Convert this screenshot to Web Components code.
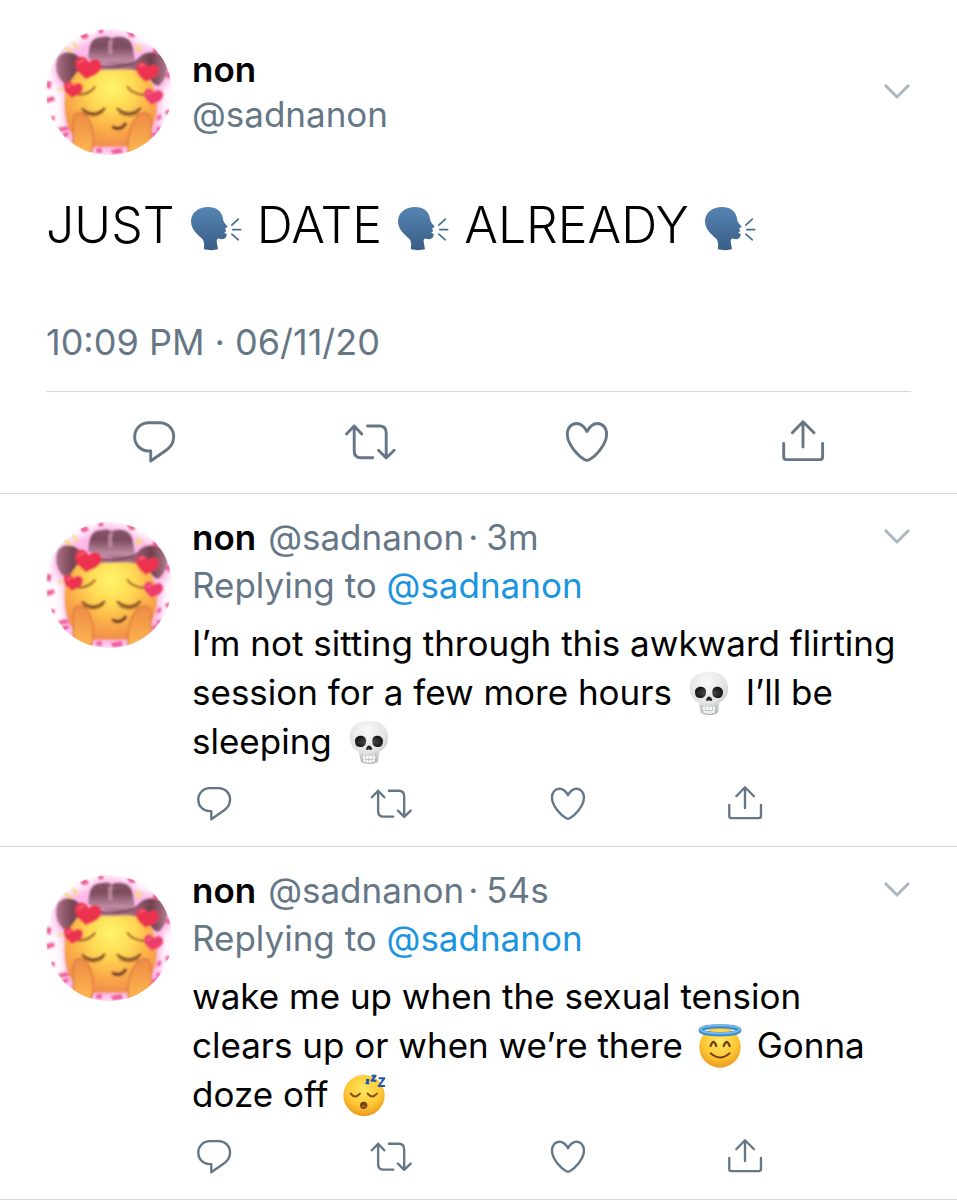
<!DOCTYPE html>
<html lang="en">
<head>
<meta charset="utf-8">
<meta name="viewport" content="width=device-width, initial-scale=1">
<title>non (@sadnanon)</title>
<style>
  body {
    margin: 0;
    background: #fff;
    color: #000;
    font-family: Inter, "Liberation Sans", sans-serif;
    font-size: 35px;
    line-height: 48px;
    --muted: #657786;
    --link: #1b95e0;
    --line: #d6dae8;
    --side: 46px;
  }
</style>
</head>
<body>
<main>
  <tweet-post name="non" handle="@sadnanon" time="10:09 PM · 06/11/20">
    JUST <tweet-emoji name="speaking"></tweet-emoji> DATE <tweet-emoji name="speaking"></tweet-emoji> ALREADY <tweet-emoji name="speaking"></tweet-emoji>
  </tweet-post>
  <tweet-reply name="non" handle="@sadnanon" time="3m" to="@sadnanon">
    I’m not sitting through this awkward flirting session for a few more hours <tweet-emoji name="skull"></tweet-emoji> I’ll be sleeping <tweet-emoji name="skull"></tweet-emoji>
  </tweet-reply>
  <tweet-reply name="non" handle="@sadnanon" time="54s" to="@sadnanon">
    wake me up when the sexual tension clears up or when we’re there <tweet-emoji name="halo"></tweet-emoji> Gonna doze off <tweet-emoji name="sleeping"></tweet-emoji>
  </tweet-reply>
</main>

<script>
const HEART = 'M0 30C-8 22 -36 12 -36 -10C-36 -32 -10 -36 0 -17C10 -36 36 -32 36 -10C36 12 8 22 0 30Z';

class TweetAvatar extends HTMLElement {
  constructor() {
    super();
    this.attachShadow({mode: 'open'});
  }

  connectedCallback() {
    this.shadowRoot.innerHTML = `
      <style>
        :host {
          display: block;
          flex: none;
          width: 126px;
          height: 126px;
        }

        svg {
          display: block;
          width: 100%;
          height: 100%;
          border-radius: 50%;
        }
      </style>

      <svg viewBox="19 25 378 378" role="img" aria-label="Profile picture">
        <defs>
          <radialGradient id="face" cx="215" cy="200" r="185" gradientUnits="userSpaceOnUse">
            <stop offset="0" stop-color="#fff56a"/>
            <stop offset=".35" stop-color="#ffdb55"/>
            <stop offset=".68" stop-color="#fbae48"/>
            <stop offset="1" stop-color="#f08a4c"/>
          </radialGradient>
          <linearGradient id="hat" x1="0" y1="45" x2="0" y2="140" gradientUnits="userSpaceOnUse">
            <stop offset="0" stop-color="#84566a"/>
            <stop offset=".35" stop-color="#7d4c5e"/>
            <stop offset=".8" stop-color="#c08da6"/>
            <stop offset="1" stop-color="#8a5467"/>
          </linearGradient>
          <linearGradient id="brim" x1="50" y1="0" x2="385" y2="0" gradientUnits="userSpaceOnUse">
            <stop offset="0" stop-color="#ab7387"/>
            <stop offset=".15" stop-color="#754552"/>
            <stop offset=".45" stop-color="#b07c93"/>
            <stop offset=".65" stop-color="#a36e84"/>
            <stop offset=".85" stop-color="#6f404c"/>
            <stop offset="1" stop-color="#b57d93"/>
          </linearGradient>
          <linearGradient id="hand" x1="0" y1="275" x2="0" y2="390" gradientUnits="userSpaceOnUse">
            <stop offset="0" stop-color="#ee8b45"/>
            <stop offset="1" stop-color="#fcb44f"/>
          </linearGradient>
          <filter id="soft"><feGaussianBlur stdDeviation="2.6"/></filter>
          <filter id="glow" x="-30%" y="-30%" width="160%" height="160%"><feGaussianBlur stdDeviation="11"/></filter>
          <path id="heart" d="${HEART}"/>
        </defs>
        <rect x="19" y="25" width="378" height="378" fill="#fffafd"/>
        <path d="M142 62C175 25 255 25 290 67L355 92C410 120 410 170 366 210L358 400H82L68 210C35 180 32 125 66 90Z" fill="#ffa2e4" opacity=".75" filter="url(#glow)"/>
        <g filter="url(#soft)">
          <g fill="#ef5f9a">
            <path d="M118 42l22-5 9 12-18 8zM176 28l14-3 2 12-14 3zM260 33l22 2 6 13-16 2zM22 180l14 4-4 22-12-7zM20 232l22-5 4 12-24 9zM34 285l13 3-5 13-12-4zM54 321l28-4 8 10-26 6zM64 341l20-8 5 10-18 10zM340 82l16 6-3 14-14-5zM379 154l13 3-2 17-12-6zM377 270l13-4 1 13-13 3zM351 288l13-9 1 14-12 8zM336 340l17-8 2 12-15 7zM349 322l12-6 1 13-10 4zM358 350l20-10-12 22zM170 384l15-3 2 16-18-2zM213 388l32-6 5 15-30 4z"/>
          </g>
          <path d="M72 79l26 15M100 65l14 20M55 207l18-2M294 72l-2 22M297 92l8-14" fill="none" stroke="#f2db72" stroke-width="7"/>
          <path d="M90 170C120 128 302 128 330 176C360 225 357 290 332 330Q300 378 245 378H175Q115 378 88 325C68 270 73 205 90 170Z" fill="url(#face)"/>
          <path d="M145 113C150 80 150 50 186 50Q204 44 216 54Q230 43 258 52C284 64 279 95 287 126Q215 148 145 113Z" fill="url(#hat)"/>
          <path d="M215 58Q208 76 214 100" fill="none" stroke="#cf9bb0" stroke-width="11" opacity=".75"/>
          <path d="M54 113C66 90 101 90 119 110C137 132 178 137 223 136C264 135 286 124 306 104C326 89 361 96 375 113C393 140 377 177 359 194Q343 199 328 170C297 139 251 147 214 148C168 149 131 147 112 155Q96 177 83 195C53 178 43 142 54 113Z" fill="url(#brim)"/>
          <path d="M155 128Q212 148 282 128" fill="none" stroke="#76404f" stroke-width="6"/>
          <g fill="none" stroke-linecap="round">
            <path d="M116 222Q151 221 165 199M264 199Q275 219 314 223" stroke="#a8642c" stroke-width="7"/>
            <path d="M129 266Q162 293 194 264M234 265Q269 292 301 264" stroke="#7a4028" stroke-width="8"/>
            <path d="M132 277Q162 295 190 275M239 278Q270 293 296 278" stroke="#b67627" stroke-width="5"/>
            <path d="M221 320Q242 331 257 310" stroke="#703727" stroke-width="10"/>
          </g>
          <path d="M101 400V302C98 275 122 268 138 285C160 305 166 355 156 393L145 410Z" fill="url(#hand)" stroke="#dd7540" stroke-width="4"/>
          <path d="M334 400V302C333 275 311 270 296 284C273 306 261 350 266 395L278 410Z" fill="url(#hand)" stroke="#dd7540" stroke-width="4"/>
          <g fill="#ec3350">
            <use href="#heart" transform="translate(144 144) rotate(10) scale(1.1)"/>
            <use href="#heart" transform="translate(322 156) rotate(10) scale(.95)"/>
            <use href="#heart" transform="translate(100 208) rotate(8) scale(.8)"/>
            <use href="#heart" transform="translate(340 229) rotate(10) scale(.8)" fill="#ee3c6c"/>
          </g>
          <g fill="none" stroke="#ff7f90" stroke-width="5" stroke-linecap="round" opacity=".7">
            <path d="M118 127q5-10 15-8M301 137q6-7 13-4M83 199q5-7 10-5M324 220q5-7 10-4"/>
          </g>
        </g>
      </svg>
    `;
  }
}

const EMOJI = {
  speaking: {
    label: 'speaking head',
    viewBox: '24 30 158 140',
    art: `
      <defs><linearGradient id="g" x1="0" y1="0" x2="0" y2="1"><stop stop-color="#5685b3"/><stop offset="1" stop-color="#395d86"/></linearGradient></defs>
      <path d="M66 165Q69 146 63 135C53 124 27 107 27 80C27 53 49 36 79 36C103 36 119 47 124 69Q123 77 129 85L137 94Q140 98 131 101L134 110L128 114L136 119Q134 134 122 134L109 132Q103 135 106 147L109 165Q89 170 66 165Z" fill="url(#g)"/>
      <path d="M151 91L171 73M154 105H178M151 119L171 136" fill="none" stroke="#456b94" stroke-width="5" stroke-linecap="round"/>`
  },
  skull: {
    label: 'skull',
    viewBox: '21 16 132 132',
    art: `
      <defs><radialGradient id="g" cx=".45" cy=".25" r=".8"><stop stop-color="#fafafa"/><stop offset=".6" stop-color="#e1e3e4"/><stop offset="1" stop-color="#a9adb0"/></radialGradient>
      <radialGradient id="e" cx=".5" cy=".55" r=".6"><stop stop-color="#555"/><stop offset="1" stop-color="#111"/></radialGradient></defs>
      <path d="M29 61C31 32 58 18 88 18C120 18 143 35 144 65C145 85 137 101 118 111L114 139C112 151 65 151 62 139L56 111C36 101 28 84 29 61Z" fill="url(#g)"/>
      <path d="M45 78C45 61 75 57 78 75C80 91 71 98 59 97C49 96 45 89 45 78ZM97 76C99 57 128 61 129 78C129 90 124 97 113 97C102 97 96 91 97 76Z" fill="url(#e)"/>
      <path d="M87 92Q80 94 78 103Q79 109 87 104Q94 109 97 102Q95 94 87 92Z" fill="#292929"/>
      <path d="M65 121Q87 129 109 121L106 141Q87 150 68 141Z" fill="#aeb2b4"/>
      <path d="M68 123h8v9h-8zM78 124h8v10h-8zM88 124h8v10h-8zM98 123h8v9h-8zM70 134h7v8h-7zM79 136h7v8h-7zM88 136h7v8h-7zM97 134h7v8h-7z" fill="#fff"/>`
  },
  halo: {
    label: 'smiling face with halo',
    viewBox: '31 24 132 132',
    art: `
      <defs><radialGradient id="g" cx=".5" cy=".35" r=".65"><stop stop-color="#ffe863"/><stop offset=".65" stop-color="#fdc733"/><stop offset="1" stop-color="#ec981f"/></radialGradient></defs>
      <circle cx="97" cy="93" r="62" fill="url(#g)"/>
      <ellipse cx="97" cy="43" rx="58" ry="12" fill="none" stroke="#428bca" stroke-width="13"/>
      <ellipse cx="97" cy="40" rx="59" ry="12" fill="none" stroke="#73b8eb" stroke-width="6"/>
      <path d="M69 90Q77 66 86 90M108 90Q117 66 126 90" fill="none" stroke="#704417" stroke-width="7" stroke-linecap="round"/>
      <path d="M69 112Q97 137 126 112" fill="none" stroke="#704417" stroke-width="6" stroke-linecap="round"/>`
  },
  sleeping: {
    label: 'sleeping face',
    viewBox: '26 20 132 132',
    art: `
      <defs><radialGradient id="g" cx=".5" cy=".35" r=".65"><stop stop-color="#ffe663"/><stop offset=".65" stop-color="#fdc733"/><stop offset="1" stop-color="#ec981f"/></radialGradient></defs>
      <circle cx="89" cy="87" r="62" fill="url(#g)"/>
      <path d="M49 82Q62 99 77 82M100 82Q113 99 128 82" fill="none" stroke="#805018" stroke-width="6" stroke-linecap="round"/>
      <ellipse cx="88" cy="117" rx="11" ry="11" fill="#74420e"/><ellipse cx="88" cy="120" rx="6" ry="5" fill="#a36224"/>
      <path d="M95 41H103L96 51H105M112 28H124L112 43H126M133 36H150L133 59H152" fill="none" stroke="#1b55b4" stroke-width="6" stroke-linejoin="round"/>`
  }
};

class TweetEmoji extends HTMLElement {
  constructor() {
    super();
    this.attachShadow({mode: 'open'});
  }

  connectedCallback() {
    const emoji = EMOJI[this.getAttribute('name')];
    this.shadowRoot.innerHTML = `
      <style>
        :host {
          display: inline-block;
          width: var(--emoji-width, 44px);
          height: var(--emoji-height, 44px);
          margin: 0 var(--emoji-gap, 5px);
          vertical-align: var(--emoji-drop, -10px);
        }

        svg {
          display: block;
          width: 100%;
          height: 100%;
        }
      </style>

      <svg viewBox="${emoji.viewBox}" role="img" aria-label="${emoji.label}">${emoji.art}</svg>
    `;
  }
}

class TweetMenu extends HTMLElement {
  constructor() {
    super();
    this.attachShadow({mode: 'open'});
  }

  connectedCallback() {
    this.shadowRoot.innerHTML = `
      <style>
        :host {
          display: block;
          flex: none;
        }

        button {
          display: block;
          padding: 0;
          border: 0;
          background: none;
          cursor: pointer;
        }

        svg {
          display: block;
          width: 28px;
          height: 48px;
        }
      </style>

      <button type="button" aria-label="More options">
        <svg viewBox="0 0 28 48"><path d="M2 17L14 29L26 17" fill="none" stroke="#aab8c2" stroke-width="3"/></svg>
      </button>
    `;
  }
}

class TweetActions extends HTMLElement {
  constructor() {
    super();
    this.attachShadow({mode: 'open'});
  }

  connectedCallback() {
    const icons = {
      Reply: 'M21.5 5.7H33C40.6 5.7 46.7 11.9 46.7 19.8C46.7 25.5 44 29.9 39.5 33L23.7 44V34H21.5C13.8 34 7.7 27.7 7.7 19.9C7.7 12 13.8 5.7 21.5 5.7Z',
      Retweet: 'M3.5 17L11.2 9L18.8 17M11.2 9V34Q11.2 40.7 18 40.7H29.8M24.5 9H36.5Q43.2 9 43.2 16V41M35.5 33.3L43.2 41L51.2 33.3',
      Like: 'M27 14.5C30 9 33.5 6.5 37.5 6.5C42.8 6.5 46.6 11 46.6 17.3C46.6 28 35 39.5 29.2 42.7Q27 43.8 24.8 42.7C19 39.5 7.3 28 7.3 17.3C7.3 11 11.2 6.5 16.5 6.5C20.5 6.5 24 9 27 14.5Z',
      Share: 'M16.3 15.7L27 4.7L38 15.7M27 5V30M7.7 26.5V40Q7.7 42.6 10.3 42.6H44Q46.6 42.6 46.6 40V26.5'
    };
    this.shadowRoot.innerHTML = `
      <style>
        :host {
          display: flex;
          justify-content: space-between;
        }

        :host([large]) {
          justify-content: space-around;
        }

        button {
          padding: 0;
          border: 0;
          background: none;
          color: var(--muted);
          cursor: pointer;
        }

        svg {
          display: block;
          width: 44px;
          height: 40px;
        }

        :host([large]) svg {
          width: 54px;
          height: 48px;
        }

        path {
          fill: none;
          stroke: currentColor;
          stroke-width: 2.9;
          stroke-linecap: round;
          stroke-linejoin: round;
        }
      </style>

      ${Object.keys(icons).map((label) => `
        <button type="button" aria-label="${label}">
          <svg viewBox="0 0 54 48"><path d="${icons[label]}"/></svg>
        </button>
      `).join('')}
    `;
  }
}

class TweetPost extends HTMLElement {
  constructor() {
    super();
    this.attachShadow({mode: 'open'});
  }

  connectedCallback() {
    this.shadowRoot.innerHTML = `
      <style>
        :host {
          display: block;
          padding: 29px var(--side) 0;
          border-bottom: 1px solid var(--line);
          --emoji-width: 52px;
          --emoji-height: 46px;
          --emoji-gap: 1px;
          --emoji-drop: -8px;
        }

        header {
          display: flex;
          align-items: center;
          gap: 20px;
        }

        .author {
          flex: 1;
          line-height: 45px;
        }

        .author a {
          display: block;
          color: var(--muted);
          text-decoration: none;
        }

        .author .name {
          color: #000;
          font-weight: 600;
        }

        p {
          margin: 38px 0 0;
          font-size: 50px;
          font-weight: 300;
          line-height: 64px;
        }

        time {
          display: block;
          margin-top: 61px;
          padding-bottom: 25px;
          border-bottom: 1px solid var(--line);
          color: var(--muted);
          font-size: 36px;
        }

        tweet-actions {
          padding: 25px 0 28px;
        }
      </style>

      <article>
        <header>
          <tweet-avatar></tweet-avatar>
          <div class="author">
            <a class="name" href="#profile">${this.getAttribute('name')}</a>
            <a href="#profile">${this.getAttribute('handle')}</a>
          </div>
          <tweet-menu></tweet-menu>
        </header>
        <p><slot></slot></p>
        <time>${this.getAttribute('time')}</time>
        <tweet-actions large></tweet-actions>
      </article>
    `;
  }
}

class TweetReply extends HTMLElement {
  constructor() {
    super();
    this.attachShadow({mode: 'open'});
  }

  connectedCallback() {
    this.shadowRoot.innerHTML = `
      <style>
        :host {
          display: block;
          padding: 19px var(--side) 23px;
          border-bottom: 1px solid var(--line);
        }

        article {
          display: flex;
          gap: 20px;
        }

        tweet-avatar {
          margin-top: 9px;
        }

        .content {
          flex: 1;
          min-width: 0;
        }

        header {
          display: flex;
          justify-content: space-between;
        }

        .meta,
        .replying {
          color: var(--muted);
        }

        .meta {
          display: flex;
          gap: 12px;
        }

        .when {
          display: flex;
          gap: 8px;
          margin-left: -8px;
        }

        a {
          color: var(--link);
          text-decoration: none;
        }

        .meta a {
          color: inherit;
        }

        .meta .name {
          color: #000;
          font-weight: 600;
        }

        p {
          margin: 10px 0 0;
          line-height: 49px;
        }

        tweet-actions {
          margin-top: 17px;
          padding-right: 20%;
        }
      </style>

      <article>
        <tweet-avatar></tweet-avatar>
        <div class="content">
          <header>
            <div class="meta">
              <a class="name" href="#profile">${this.getAttribute('name')}</a>
              <a href="#profile">${this.getAttribute('handle')}</a>
              <span class="when"><span>·</span><time>${this.getAttribute('time')}</time></span>
            </div>
            <tweet-menu></tweet-menu>
          </header>
          <div class="replying">Replying to <a href="#profile">${this.getAttribute('to')}</a></div>
          <p><slot></slot></p>
          <tweet-actions></tweet-actions>
        </div>
      </article>
    `;
  }
}

customElements.define('tweet-avatar', TweetAvatar);
customElements.define('tweet-emoji', TweetEmoji);
customElements.define('tweet-menu', TweetMenu);
customElements.define('tweet-actions', TweetActions);
customElements.define('tweet-post', TweetPost);
customElements.define('tweet-reply', TweetReply);
</script>
</body>
</html>
